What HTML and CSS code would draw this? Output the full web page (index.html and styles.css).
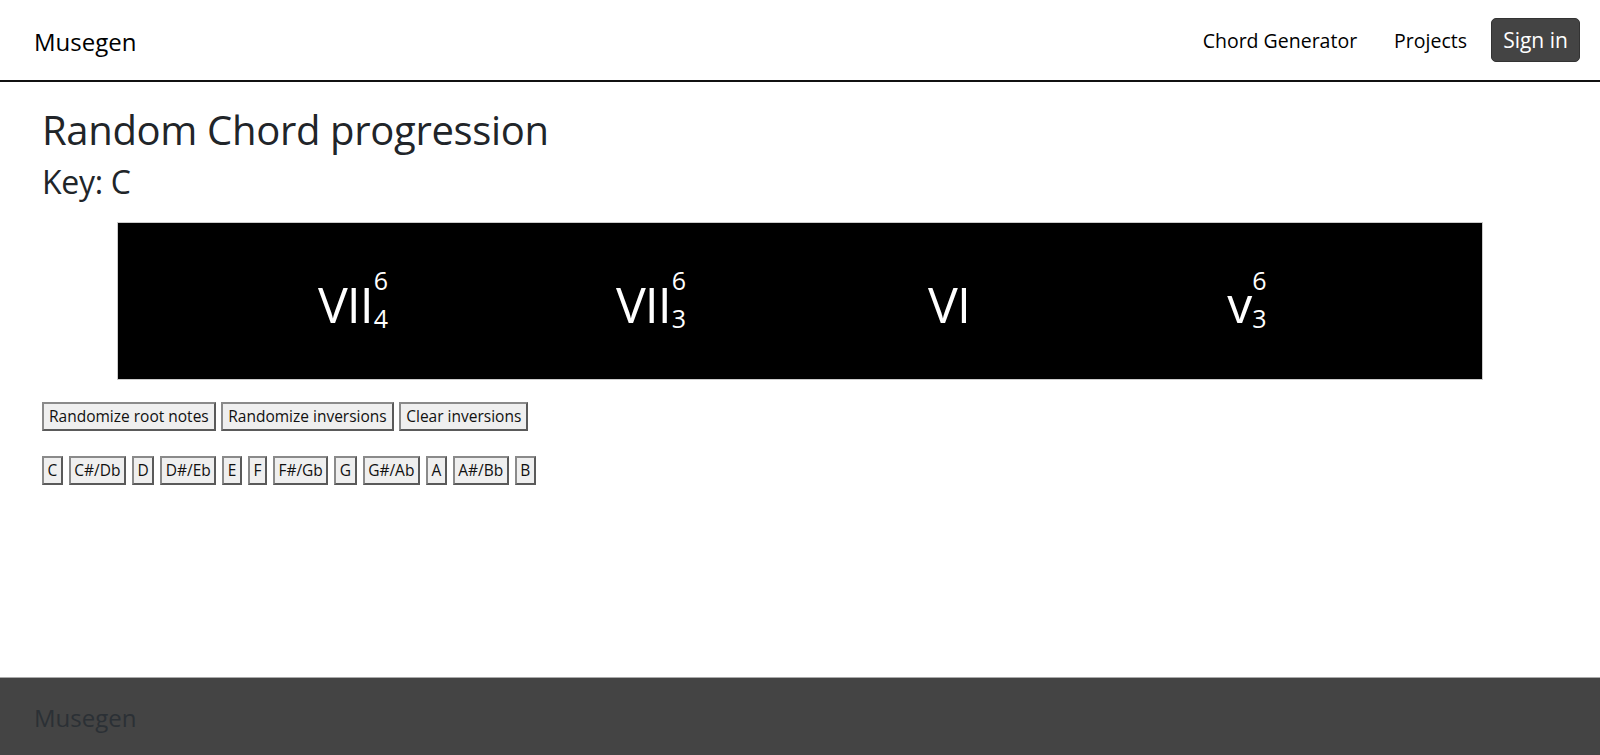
FILE: index.html
```html
<!DOCTYPE html>
<html lang="en">
<head>
<meta charset="utf-8">
<title>Musegen</title>
<link rel="stylesheet" href="styles.css">
</head>
<body>
<header class="topbar">
  <a class="brand" href="#">Musegen</a>
  <nav class="nav">
    <a class="nav-link" href="#">Chord Generator</a>
    <a class="nav-link nav-last" href="#">Projects</a>
    <a class="signin" href="#">Sign in</a>
  </nav>
</header>
<main class="content">
  <h1 class="title">Random Chord progression</h1>
  <h2 class="key">Key: C</h2>
  <div class="progression">
    <div class="chord">VII<span class="fig"><span>6</span><span>4</span></span></div>
    <div class="chord">VII<span class="fig"><span>6</span><span>3</span></span></div>
    <div class="chord">VI</div>
    <div class="chord">v<span class="fig"><span>6</span><span>3</span></span></div>
  </div>
  <div class="btn-row">
    <button class="btn">Randomize root notes</button>
    <button class="btn">Randomize inversions</button>
    <button class="btn">Clear inversions</button>
  </div>
  <div class="btn-row notes">
    <button class="btn">C</button>
    <button class="btn">C#/Db</button>
    <button class="btn">D</button>
    <button class="btn">D#/Eb</button>
    <button class="btn">E</button>
    <button class="btn">F</button>
    <button class="btn">F#/Gb</button>
    <button class="btn">G</button>
    <button class="btn">G#/Ab</button>
    <button class="btn">A</button>
    <button class="btn">A#/Bb</button>
    <button class="btn">B</button>
  </div>
</main>
<footer class="footer">
  <span class="footer-brand">Musegen</span>
</footer>
</body>
</html>
```
FILE: styles.css
```css
* { box-sizing: border-box; }
html, body { height: 100%; }
body {
  margin: 0;
  font-family: "Open Sans", "Noto Sans", sans-serif;
  color: #212529;
  background: #fff;
  display: flex;
  flex-direction: column;
  min-height: 100vh;
}
a { text-decoration: none; }

.topbar {
  height: 82px;
  border-bottom: 2px solid #111;
  display: flex;
  align-items: center;
  justify-content: space-between;
  padding: 0 20px 0 34px;
  flex-shrink: 0;
}
.brand {
  color: #000;
  font-size: 24px;
  margin-top: 2px;
}
.nav {
  display: flex;
  align-items: center;
}
.nav-link {
  color: #000;
  font-size: 19.5px;
  margin-right: 37px;
}
.nav-last { margin-right: 24px; }
.signin {
  background: #444;
  color: #fff;
  font-size: 21px;
  border: 1px solid #333;
  border-radius: 5px;
  height: 44px;
  width: 89px;
  display: flex;
  align-items: center;
  justify-content: center;
}

.content {
  flex: 1;
  padding: 0 42px;
}
.title {
  font-size: 40px;
  font-weight: 400;
  line-height: 1.2;
  margin: 24px 0 9px;
  letter-spacing: -0.33px;
}
.key {
  font-size: 32px;
  font-weight: 400;
  line-height: 1.2;
  margin: 0 0 21px;
  letter-spacing: -0.3px;
}
.progression {
  margin: 0 75px;
  height: 158px;
  background: #000;
  border: 1px solid #ccc;
  color: #fff;
  display: grid;
  grid-template-columns: repeat(4, 298px);
  justify-content: center;
  align-items: center;
}
.chord {
  text-align: center;
  font-size: 50px;
  line-height: 124px;
  letter-spacing: -1px;
  padding-top: 5px;
}
.fig {
  display: inline-flex;
  flex-direction: column;
  font-size: 25px;
  line-height: 38px;
  vertical-align: 33px;
  letter-spacing: 0;
  margin-left: 1px;
}
.fig span { display: block; text-align: left; }

.btn-row {
  margin-top: 22px;
  display: flex;
  gap: 5.5px;
}
.btn-row.notes { margin-top: 25px; gap: 6px; }
.btn {
  font-family: "Open Sans", "Noto Sans", sans-serif;
  font-size: 15.5px;
  color: #111;
  background: #efefef;
  border: 2px solid #767676;
  border-color: #8a8a8a #5a5a5a #5a5a5a #8a8a8a;
  border-radius: 0;
  padding: 1px 5px;
  height: 29px;
  line-height: 23px;
}
.notes .btn { padding: 1px 3.5px; }

.footer {
  height: 78px;
  background: #444;
  border-top: 1px solid #aaa;
  display: flex;
  align-items: center;
  padding: 0 34px;
  flex-shrink: 0;
}
.footer-brand {
  color: #2b3035;
  font-size: 24px;
  margin-top: 2px;
}
```
